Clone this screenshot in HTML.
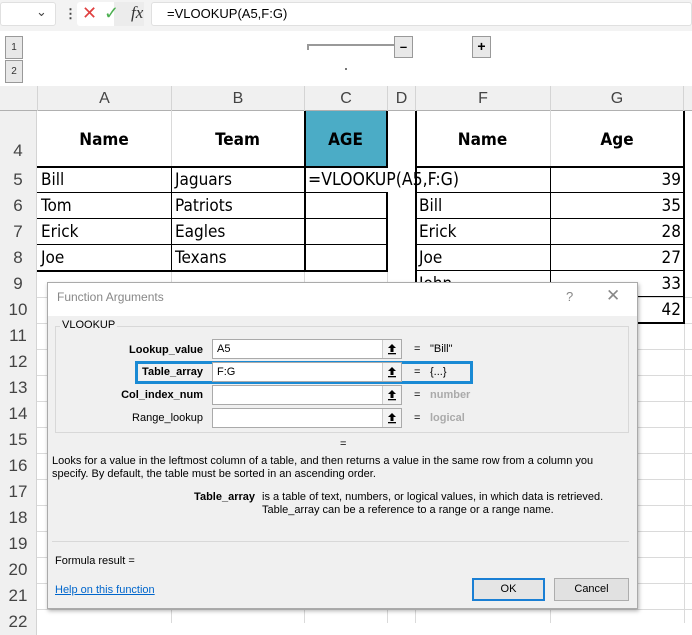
<!DOCTYPE html>
<html><head><style>
*{margin:0;padding:0;box-sizing:border-box}
body{width:692px;height:623px;overflow:hidden;background:#fff;font-family:"Liberation Sans",sans-serif;position:relative}
.a{position:absolute}
.rh{position:absolute;left:0;width:37px;background:#f0f0f0;border-right:1px solid #d4d4d4;color:#444;font-size:17px;text-align:center}
.cell{position:absolute;font-size:17px;color:#000;line-height:26px;padding-left:4px;font-family:"DejaVu Sans Condensed","Liberation Sans",sans-serif}
.hl{position:absolute;height:1px;background:#dadada}
.vl{position:absolute;width:1px;background:#dadada}
.lbl{position:absolute;font-size:11px;font-weight:bold;text-align:right;width:160px;left:43px}
.inp{position:absolute;left:212px;width:190px;height:20px;border:1px solid #aaa;background:#fff;font-size:11px;padding:3px 0 0 4px}
.btn{position:absolute;right:0;top:0;width:19px;height:18px;border-left:1px solid #ccc;background:#f3f3f3}
.btn svg{position:absolute;left:4px;top:3px}
.eq{position:absolute;left:414px;font-size:11px}
.res{position:absolute;left:430px;font-size:11px}
</style></head><body>
<!-- formula bar -->
<div class="a" style="left:0;top:0;width:692px;height:31px;background:#f3f3f3"></div>
<div class="a" style="left:0;top:2px;width:56px;height:24px;background:#fff;border-radius:3px;border:1px solid #e0e0e0"></div>
<div class="a" style="left:36px;top:4px;font-size:13px;color:#444">&#8964;</div>
<div class="a" style="left:64px;top:6px;font-size:13px;color:#444;font-weight:bold">&#8942;</div>
<div class="a" style="left:77px;top:2px;width:37px;height:24px;background:#fff;border-radius:3px 0 0 3px"></div>
<div class="a" style="left:114px;top:2px;width:30px;height:24px;background:#ececec"></div>
<div class="a" style="left:82px;top:3px;font-size:18px;color:#e04040">&#10005;</div>
<div class="a" style="left:104px;top:3px;font-size:18px;color:#4caf50">&#10003;</div>
<div class="a" style="left:131px;top:3px;font-size:17px;font-style:italic;font-family:'Liberation Serif',serif;color:#333">fx</div>
<div class="a" style="left:151px;top:2px;width:541px;height:24px;background:#fff;border:1px solid #e0e0e0;border-radius:3px"></div>
<div class="a" style="left:167px;top:6px;font-size:13px">=VLOOKUP(A5,F:G)</div>
<!-- outline area -->
<div class="a" style="left:0;top:31px;width:692px;height:55px;background:#fff"></div>
<div class="a" style="left:5px;top:36px;width:18px;height:23px;background:#e8e8e8;border:1px solid #999;font-size:10px;text-align:center;line-height:21px;color:#333">1</div>
<div class="a" style="left:5px;top:60px;width:18px;height:23px;background:#e8e8e8;border:1px solid #999;font-size:10px;text-align:center;line-height:21px;color:#333">2</div>
<div class="a" style="left:307px;top:44px;width:88px;height:2px;background:#999"></div>
<div class="a" style="left:307px;top:44px;width:2px;height:6px;background:#999"></div>
<div class="a" style="left:394px;top:36px;width:19px;height:22px;background:#e8e8e8;border:1px solid #999;text-align:center;font-weight:bold;font-size:13px;line-height:19px">&#8211;</div>
<div class="a" style="left:472px;top:36px;width:19px;height:22px;background:#e8e8e8;border:1px solid #999;text-align:center;font-weight:bold;font-size:14px;line-height:19px">+</div>
<div class="a" style="left:345px;top:68px;width:2px;height:2px;background:#777"></div>
<!-- column headers -->
<div class="a" style="left:0;top:86px;width:692px;height:25px;background:#f0f0f0;border-bottom:1px solid #b0b0b0"></div>
<div class="a" style="left:37px;top:86px;width:134px;height:25px;text-align:center;line-height:25px;font-size:16px;color:#444;border-left:1px solid #d4d4d4">A</div>
<div class="a" style="left:171px;top:86px;width:133px;height:25px;text-align:center;line-height:25px;font-size:16px;color:#444;border-left:1px solid #d4d4d4">B</div>
<div class="a" style="left:304px;top:86px;width:83px;height:25px;text-align:center;line-height:25px;font-size:16px;color:#444;border-left:1px solid #d4d4d4">C</div>
<div class="a" style="left:387px;top:86px;width:28px;height:25px;text-align:center;line-height:25px;font-size:16px;color:#444;border-left:1px solid #d4d4d4">D</div>
<div class="a" style="left:415px;top:86px;width:135px;height:25px;text-align:center;line-height:25px;font-size:16px;color:#444;border-left:1px solid #d4d4d4">F</div>
<div class="a" style="left:550px;top:86px;width:134px;height:25px;text-align:center;line-height:25px;font-size:16px;color:#444;border-left:1px solid #d4d4d4;border-right:1px solid #d4d4d4">G</div>
<!-- row headers -->
<div class="rh" style="top:111px;height:56px;line-height:80px">4</div>
<div class="rh" style="top:167px;height:26px;line-height:26px">5</div>
<div class="rh" style="top:193px;height:26px;line-height:26px">6</div>
<div class="rh" style="top:219px;height:26px;line-height:26px">7</div>
<div class="rh" style="top:245px;height:26px;line-height:26px">8</div>
<div class="rh" style="top:271px;height:26px;line-height:26px">9</div>
<div class="rh" style="top:297px;height:26px;line-height:26px">10</div>
<div class="rh" style="top:323px;height:26px;line-height:26px">11</div>
<div class="rh" style="top:349px;height:26px;line-height:26px">12</div>
<div class="rh" style="top:375px;height:26px;line-height:26px">13</div>
<div class="rh" style="top:401px;height:26px;line-height:26px">14</div>
<div class="rh" style="top:427px;height:26px;line-height:26px">15</div>
<div class="rh" style="top:453px;height:26px;line-height:26px">16</div>
<div class="rh" style="top:479px;height:26px;line-height:26px">17</div>
<div class="rh" style="top:505px;height:26px;line-height:26px">18</div>
<div class="rh" style="top:531px;height:26px;line-height:26px">19</div>
<div class="rh" style="top:557px;height:26px;line-height:26px">20</div>
<div class="rh" style="top:583px;height:26px;line-height:26px">21</div>
<div class="rh" style="top:609px;height:26px;line-height:26px">22</div>
<!-- grid lines -->
<div class="vl" style="left:171px;top:111px;height:512px"></div>
<div class="vl" style="left:304px;top:111px;height:512px"></div>
<div class="vl" style="left:387px;top:111px;height:512px"></div>
<div class="vl" style="left:415px;top:111px;height:512px"></div>
<div class="vl" style="left:550px;top:111px;height:512px"></div>
<div class="vl" style="left:684px;top:111px;height:512px"></div>
<div class="hl" style="left:37px;top:297px;width:655px"></div>
<div class="hl" style="left:37px;top:323px;width:655px"></div>
<div class="hl" style="left:37px;top:349px;width:655px"></div>
<div class="hl" style="left:37px;top:375px;width:655px"></div>
<div class="hl" style="left:37px;top:401px;width:655px"></div>
<div class="hl" style="left:37px;top:427px;width:655px"></div>
<div class="hl" style="left:37px;top:453px;width:655px"></div>
<div class="hl" style="left:37px;top:479px;width:655px"></div>
<div class="hl" style="left:37px;top:505px;width:655px"></div>
<div class="hl" style="left:37px;top:531px;width:655px"></div>
<div class="hl" style="left:37px;top:557px;width:655px"></div>
<div class="hl" style="left:37px;top:583px;width:655px"></div>
<div class="hl" style="left:37px;top:609px;width:655px"></div>
<!-- table 1 -->
<div class="a" style="left:304px;top:111px;width:83px;height:56px;background:#4bacc6"></div>
<div class="a" style="left:37px;top:166px;width:351px;height:2px;background:#000"></div>
<div class="a" style="left:37px;top:270px;width:351px;height:2px;background:#000"></div>
<div class="a" style="left:37px;top:192px;width:267px;height:1px;background:#000"></div>
<div class="a" style="left:37px;top:218px;width:267px;height:1px;background:#000"></div>
<div class="a" style="left:37px;top:244px;width:267px;height:1px;background:#000"></div>
<div class="a" style="left:304px;top:192px;width:83px;height:1px;background:#000"></div>
<div class="a" style="left:304px;top:218px;width:83px;height:1px;background:#000"></div>
<div class="a" style="left:304px;top:244px;width:83px;height:1px;background:#000"></div>
<div class="a" style="left:171px;top:167px;width:1px;height:104px;background:#000"></div>
<div class="a" style="left:304px;top:111px;width:2px;height:160px;background:#000"></div>
<div class="a" style="left:386px;top:111px;width:2px;height:160px;background:#000"></div>
<div class="a" style="left:37px;top:111px;width:134px;height:56px;text-align:center;line-height:58px;font-weight:bold;font-size:17px;font-family:'DejaVu Sans Condensed',sans-serif">Name</div>
<div class="a" style="left:171px;top:111px;width:133px;height:56px;text-align:center;line-height:58px;font-weight:bold;font-size:17px;font-family:'DejaVu Sans Condensed',sans-serif">Team</div>
<div class="a" style="left:304px;top:111px;width:83px;height:56px;text-align:center;line-height:58px;font-weight:bold;font-size:17px;font-family:'DejaVu Sans Condensed',sans-serif">AGE</div>
<div class="cell" style="left:37px;top:167px">Bill</div>
<div class="cell" style="left:171px;top:167px">Jaguars</div>
<div class="a" style="left:306px;top:168px;width:244px;height:24px;background:#fff"></div>
<div class="cell" style="left:304px;top:167px;font-size:17.5px">=VLOOKUP(A5,F:G)</div>
<div class="cell" style="left:37px;top:193px">Tom</div>
<div class="cell" style="left:171px;top:193px">Patriots</div>
<div class="cell" style="left:37px;top:219px">Erick</div>
<div class="cell" style="left:171px;top:219px">Eagles</div>
<div class="cell" style="left:37px;top:245px">Joe</div>
<div class="cell" style="left:171px;top:245px">Texans</div>
<!-- table 2 -->
<div class="a" style="left:415px;top:111px;width:2px;height:212px;background:#000"></div>
<div class="a" style="left:683px;top:111px;width:2px;height:212px;background:#000"></div>
<div class="a" style="left:415px;top:166px;width:270px;height:2px;background:#000"></div>
<div class="a" style="left:550px;top:167px;width:1px;height:156px;background:#000"></div>
<div class="a" style="left:415px;top:192px;width:270px;height:1px;background:#000"></div>
<div class="a" style="left:415px;top:218px;width:270px;height:1px;background:#000"></div>
<div class="a" style="left:415px;top:244px;width:270px;height:1px;background:#000"></div>
<div class="a" style="left:415px;top:270px;width:270px;height:1px;background:#000"></div>
<div class="a" style="left:415px;top:296px;width:270px;height:1px;background:#000"></div>
<div class="a" style="left:415px;top:322px;width:270px;height:2px;background:#000"></div>
<div class="a" style="left:415px;top:111px;width:135px;height:56px;text-align:center;line-height:58px;font-weight:bold;font-size:17px;font-family:'DejaVu Sans Condensed',sans-serif">Name</div>
<div class="a" style="left:550px;top:111px;width:134px;height:56px;text-align:center;line-height:58px;font-weight:bold;font-size:17px;font-family:'DejaVu Sans Condensed',sans-serif">Age</div>
<div class="cell" style="left:550px;top:167px;width:133px;text-align:right;padding-right:2px">39</div>
<div class="cell" style="left:415px;top:193px">Bill</div>
<div class="cell" style="left:550px;top:193px;width:133px;text-align:right;padding-right:2px">35</div>
<div class="cell" style="left:415px;top:219px">Erick</div>
<div class="cell" style="left:550px;top:219px;width:133px;text-align:right;padding-right:2px">28</div>
<div class="cell" style="left:415px;top:245px">Joe</div>
<div class="cell" style="left:550px;top:245px;width:133px;text-align:right;padding-right:2px">27</div>
<div class="cell" style="left:415px;top:271px">John</div>
<div class="cell" style="left:550px;top:271px;width:133px;text-align:right;padding-right:2px">33</div>
<div class="cell" style="left:550px;top:297px;width:133px;text-align:right;padding-right:2px">42</div>
<!-- dialog -->
<div class="a" style="left:47px;top:282px;width:591px;height:327px;background:#f0f0f0;border:1px solid #aaa;box-shadow:1px 2px 4px rgba(0,0,0,.3)"></div>
<div class="a" style="left:48px;top:283px;width:589px;height:33px;background:#fff"></div>
<div class="a" style="left:57px;top:290px;font-size:12px;color:#888">Function Arguments</div>
<div class="a" style="left:566px;top:289px;font-size:13px;color:#888">?</div>
<div class="a" style="left:606px;top:286px;font-size:17px;color:#888">&#10005;</div>
<div class="a" style="left:55px;top:326px;width:574px;height:107px;border:1px solid #d8d8d8"></div>
<div class="a" style="left:60px;top:319px;font-size:11px;background:#f0f0f0;padding:0 2px">VLOOKUP</div>
<div class="a" style="left:135px;top:361px;width:338px;height:23px;border:3px solid #1a8ad4"></div>
<div class="lbl" style="top:344px">Lookup_value</div>
<div class="lbl" style="top:366px">Table_array</div>
<div class="lbl" style="top:389px">Col_index_num</div>
<div class="lbl" style="top:412px;font-weight:normal">Range_lookup</div>
<div class="inp" style="top:339px">A5<div class="btn"><svg width="10" height="12"><path d="M5 1L1 5H3.5V9H6.5V5H9Z" fill="#000"/><rect x="1" y="10" width="8" height="1.3" fill="#000"/></svg></div></div>
<div class="inp" style="top:362px">F:G<div class="btn"><svg width="10" height="12"><path d="M5 1L1 5H3.5V9H6.5V5H9Z" fill="#000"/><rect x="1" y="10" width="8" height="1.3" fill="#000"/></svg></div></div>
<div class="inp" style="top:385px"><div class="btn"><svg width="10" height="12"><path d="M5 1L1 5H3.5V9H6.5V5H9Z" fill="#000"/><rect x="1" y="10" width="8" height="1.3" fill="#000"/></svg></div></div>
<div class="inp" style="top:408px"><div class="btn"><svg width="10" height="12"><path d="M5 1L1 5H3.5V9H6.5V5H9Z" fill="#000"/><rect x="1" y="10" width="8" height="1.3" fill="#000"/></svg></div></div>
<div class="eq" style="top:343px">=</div><div class="res" style="top:343px">"Bill"</div>
<div class="eq" style="top:366px">=</div><div class="res" style="top:366px">{...}</div>
<div class="eq" style="top:389px">=</div><div class="res" style="top:389px;color:#aaa;font-weight:bold">number</div>
<div class="eq" style="top:412px">=</div><div class="res" style="top:412px;color:#aaa;font-weight:bold">logical</div>
<div class="a" style="left:340px;top:438px;font-size:11px">=</div>
<div class="a" style="left:52px;top:455px;width:572px;font-size:11px;line-height:13px">Looks for a value in the leftmost column of a table, and then returns a value in the same row from a column you specify. By default, the table must be sorted in an ascending order.</div>
<div class="a" style="left:163px;top:491px;width:92px;text-align:right;font-size:11px;font-weight:bold">Table_array</div>
<div class="a" style="left:262px;top:491px;width:370px;font-size:11px;line-height:13px">is a table of text, numbers, or logical values, in which data is retrieved.<br>Table_array can be a reference to a range or a range name.</div>
<div class="a" style="left:52px;top:541px;width:577px;height:1px;background:#d8d8d8"></div>
<div class="a" style="left:55px;top:555px;font-size:11px">Formula result =</div>
<div class="a" style="left:55px;top:584px;font-size:11px;color:#0066cc;text-decoration:underline">Help on this function</div>
<div class="a" style="left:472px;top:578px;width:73px;height:23px;border:2px solid #1a7fd4;background:#e5e5e5;font-size:11px;text-align:center;line-height:19px">OK</div>
<div class="a" style="left:554px;top:578px;width:75px;height:23px;border:1px solid #adadad;background:#e1e1e1;font-size:11px;text-align:center;line-height:21px">Cancel</div>
</body></html>
